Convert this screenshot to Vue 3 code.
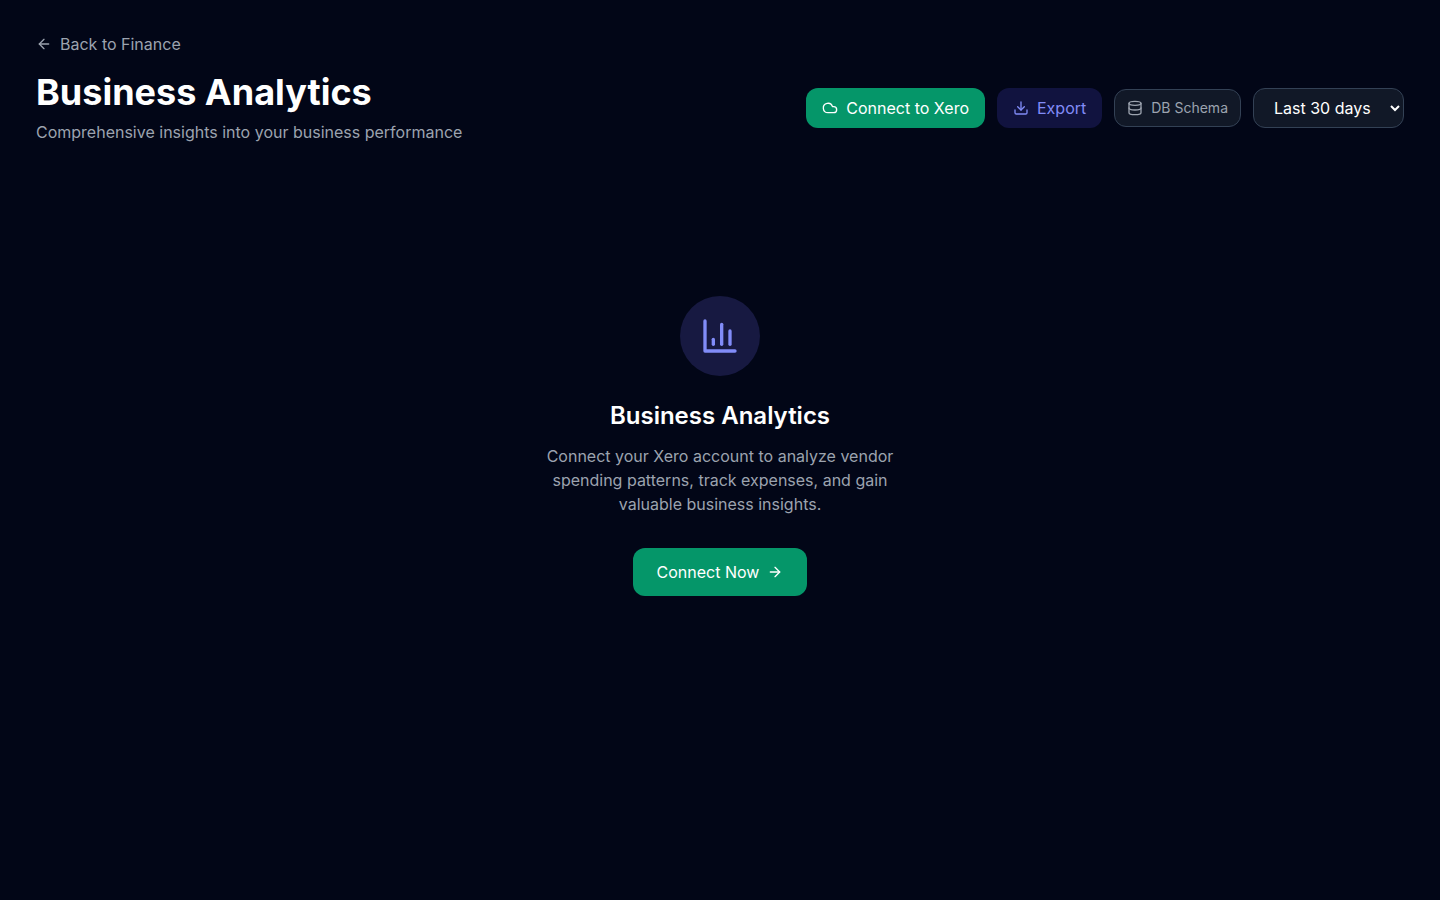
<script setup>
import { ref } from 'vue'

const period = ref('30')
const periods = [
  { value: '7', label: 'Last 7 days' },
  { value: '30', label: 'Last 30 days' },
  { value: '90', label: 'Last 90 days' },
  { value: '365', label: 'Last year' },
]
</script>

<template>
  <main class="page">
    <header class="header">
      <div class="heading">
        <a class="back" href="#finance">
          <svg class="icon" viewBox="0 0 24 24" aria-hidden="true"><path d="m12 19-7-7 7-7" /><path d="M19 12H5" /></svg>
          Back to Finance
        </a>
        <h1>Business Analytics</h1>
        <p>Comprehensive insights into your business performance</p>
      </div>
      <div class="actions">
        <button type="button" class="btn primary">
          <svg class="icon" viewBox="0 0 24 24" aria-hidden="true"><path d="M17.5 19H9a7 7 0 1 1 6.71-9h1.79a4.5 4.5 0 1 1 0 9Z" /></svg>
          Connect to Xero
        </button>
        <button type="button" class="btn export">
          <svg class="icon" viewBox="0 0 24 24" aria-hidden="true"><path d="M21 15v4a2 2 0 0 1-2 2H5a2 2 0 0 1-2-2v-4" /><path d="m7 10 5 5 5-5" /><path d="M12 15V3" /></svg>
          Export
        </button>
        <button type="button" class="btn schema">
          <svg class="icon" viewBox="0 0 24 24" aria-hidden="true"><ellipse cx="12" cy="5" rx="9" ry="3" /><path d="M3 5v14a9 3 0 0 0 18 0V5" /><path d="M3 12a9 3 0 0 0 18 0" /></svg>
          DB Schema
        </button>
        <select v-model="period" class="period" aria-label="Reporting period">
          <option v-for="p in periods" :key="p.value" :value="p.value">{{ p.label }}</option>
        </select>
      </div>
    </header>

    <section class="empty">
      <div class="badge">
        <svg class="chart" viewBox="0 0 24 24" aria-hidden="true"><path d="M3 3v18h18" /><path d="M18 17V9" /><path d="M13 17V5" /><path d="M8 17v-3" /></svg>
      </div>
      <h2>Business Analytics</h2>
      <p>Connect your Xero account to analyze vendor spending patterns, track expenses, and gain valuable business insights.</p>
      <button type="button" class="btn primary large">
        Connect Now
        <svg class="icon" viewBox="0 0 24 24" aria-hidden="true"><path d="M5 12h14" /><path d="m12 5 7 7-7 7" /></svg>
      </button>
    </section>
  </main>
</template>

<style>
body {
  background: #020617;
  color-scheme: dark;
}
</style>

<style scoped>
.page {
  box-sizing: border-box;
  min-height: 100vh;
  padding: 32px 36px;
  background: #020617;
  color: #fff;
  font-family: Inter, "Liberation Sans", sans-serif;
  font-size: 16px;
  line-height: 24px;
}

.header {
  display: flex;
  align-items: center;
  justify-content: space-between;
  gap: 24px;
}

.heading {
  display: flex;
  flex-direction: column;
  align-items: flex-start;
}

.back {
  display: inline-flex;
  align-items: center;
  gap: 8px;
  margin-bottom: 16px;
  color: #9ca3af;
  text-decoration: none;
}

h1,
h2,
p {
  margin: 0;
}

h1 {
  margin-bottom: 8px;
  font-size: 36px;
  font-weight: 700;
  line-height: 40px;
}

p {
  color: #9ca3af;
}

.icon,
.chart {
  flex: none;
  width: 16px;
  height: 16px;
  fill: none;
  stroke: currentColor;
  stroke-width: 2;
  stroke-linecap: round;
  stroke-linejoin: round;
}

.actions {
  display: flex;
  align-items: center;
  gap: 12px;
  padding-top: 40px;
}

.btn {
  display: inline-flex;
  align-items: center;
  gap: 8px;
  padding: 8px 16px;
  border: 0;
  border-radius: 12px;
  font: inherit;
  cursor: pointer;
}

.primary {
  background: #059669;
  color: #fff;
}

.export {
  background: #11133f;
  color: #818cf8;
}

.schema {
  padding: 8px 12px;
  border: 1px solid #334155;
  background: #111827;
  color: #9ca3af;
  font-size: 14px;
  line-height: 20px;
}

.period {
  height: 40px;
  padding: 0 16px;
  border: 1px solid #334155;
  border-radius: 12px;
  background: #111827;
  color: #fff;
  font: inherit;
}

.empty {
  display: flex;
  flex-direction: column;
  align-items: center;
  padding-top: 152px;
  text-align: center;
}

.badge {
  display: flex;
  align-items: center;
  justify-content: center;
  width: 80px;
  height: 80px;
  margin-bottom: 24px;
  border-radius: 50%;
  background: #171941;
  color: #818cf8;
}

.chart {
  width: 40px;
  height: 40px;
}

h2 {
  margin-bottom: 12px;
  font-size: 24px;
  font-weight: 600;
  line-height: 32px;
}

.empty p {
  max-width: 384px;
  margin-bottom: 32px;
}

.large {
  padding: 12px 24px;
}
</style>
